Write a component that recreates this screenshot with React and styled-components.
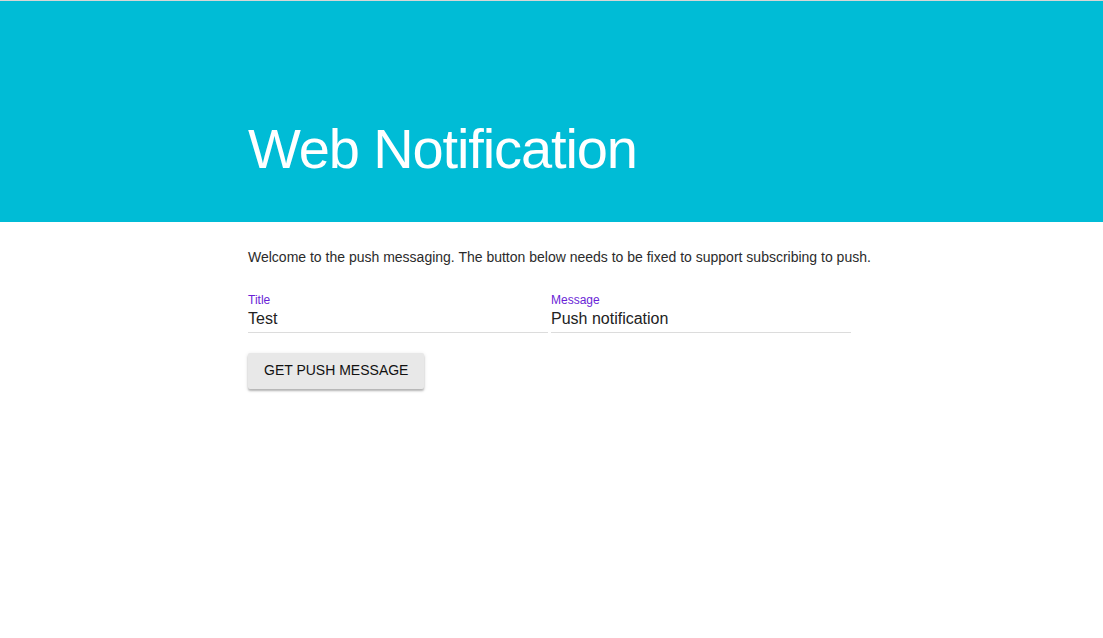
import React from "react";
import styled, { createGlobalStyle } from "styled-components";

const Global = createGlobalStyle`
  html, body { margin: 0; padding: 0; background: #fff; }
  body { font-family: "Liberation Sans", Arial, sans-serif; color: rgba(0,0,0,0.87); }
`;

const Page = styled.div`
  border-top: 1px solid #d6d6d6;
  min-height: 637px;
`;

const Header = styled.header`
  background: #00bcd6;
  height: 221px;
  display: flex;
  align-items: flex-end;
  padding-left: 248px;
  box-sizing: border-box;
`;

const Title = styled.h1`
  margin: 0 0 37px;
  font-size: 56px;
  font-weight: 400;
  letter-spacing: -0.02em;
  line-height: 72px;
  color: #fff;
`;

const Main = styled.main`
  margin-left: 248px;
  padding-top: 25px;
`;

const Intro = styled.p`
  margin: 0;
  font-size: 14px;
  line-height: 20px;
  color: #2b2b2b;
  white-space: nowrap;
`;

const Fields = styled.div`
  display: grid;
  grid-template-columns: 300px 300px;
  column-gap: 3px;
  width: 603px;
  margin-top: 26px;
`;

const Field = styled.label`
  display: flex;
  flex-direction: column;
  border-bottom: 1px solid #dcdcdc;
  padding-bottom: 1px;
`;

const Label = styled.span`
  font-size: 12px;
  line-height: 14px;
  color: #6a1fd6;
`;

const Value = styled.span`
  font-size: 16px;
  line-height: 24px;
  color: #222;
`;

const Button = styled.button`
  margin-top: 20px;
  height: 36px;
  padding: 0 16px 2px;
  border: none;
  border-radius: 2px;
  background: #e8e8e8;
  font-family: "Liberation Sans", Arial, sans-serif;
  font-size: 14px;
  color: #111;
  text-transform: uppercase;
  box-shadow: 0 2px 2px rgba(0,0,0,0.24), 0 1px 4px rgba(0,0,0,0.12);
  cursor: pointer;
`;

export default function App() {
  return (
    <Page>
      <Global />
      <Header>
        <Title>Web Notification</Title>
      </Header>
      <Main>
        <Intro>
          Welcome to the push messaging. The button below needs to be fixed to support subscribing to push.
        </Intro>
        <Fields>
          <Field>
            <Label>Title</Label>
            <Value>Test</Value>
          </Field>
          <Field>
            <Label>Message</Label>
            <Value>Push notification</Value>
          </Field>
        </Fields>
        <Button>Get push message</Button>
      </Main>
    </Page>
  );
}
